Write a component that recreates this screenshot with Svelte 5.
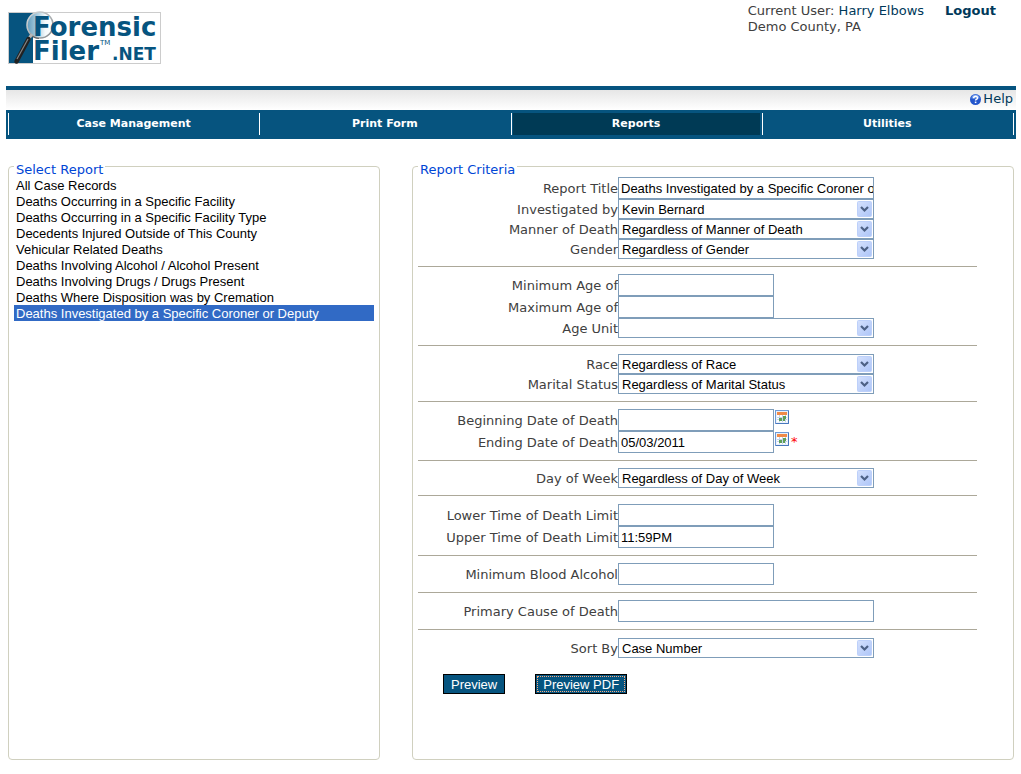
<script>
  const tabs = ['Case Management', 'Print Form', 'Reports', 'Utilities'];
  let activeTab = $state('Reports');

  const reports = [
    'All Case Records',
    'Deaths Occurring in a Specific Facility',
    'Deaths Occurring in a Specific Facility Type',
    'Decedents Injured Outside of This County',
    'Vehicular Related Deaths',
    'Deaths Involving Alcohol / Alcohol Present',
    'Deaths Involving Drugs / Drugs Present',
    'Deaths Where Disposition was by Cremation',
    'Deaths Investigated by a Specific Coroner or Deputy'
  ];
  let report = $state(reports[8]);

  const groups = [
    {
      rows: [
        { id: 'title', label: 'Report Title', type: 'text', wide: true, value: 'Deaths Investigated by a Specific Coroner or Deputy' },
        { id: 'investigator', label: 'Investigated by', type: 'select', value: 'Kevin Bernard' },
        { id: 'manner', label: 'Manner of Death', type: 'select', value: 'Regardless of Manner of Death' },
        { id: 'gender', label: 'Gender', type: 'select', value: 'Regardless of Gender' }
      ]
    },
    {
      rows: [
        { id: 'min-age', label: 'Minimum Age of', type: 'text', value: '' },
        { id: 'max-age', label: 'Maximum Age of', type: 'text', value: '' },
        { id: 'age-unit', label: 'Age Unit', type: 'select', value: '' }
      ]
    },
    {
      roomy: true,
      rows: [
        { id: 'race', label: 'Race', type: 'select', value: 'Regardless of Race' },
        { id: 'marital', label: 'Marital Status', type: 'select', value: 'Regardless of Marital Status' }
      ]
    },
    {
      rows: [
        { id: 'begin-date', label: 'Beginning Date of Death', type: 'text', date: true, value: '' },
        { id: 'end-date', label: 'Ending Date of Death', type: 'text', date: true, required: true, value: '05/03/2011' }
      ]
    },
    {
      rows: [{ id: 'weekday', label: 'Day of Week', type: 'select', value: 'Regardless of Day of Week' }]
    },
    {
      roomy: true,
      rows: [
        { id: 'lower-time', label: 'Lower Time of Death Limit', type: 'text', value: '' },
        { id: 'upper-time', label: 'Upper Time of Death Limit', type: 'text', value: '11:59PM' }
      ]
    },
    { rows: [{ id: 'alcohol', label: 'Minimum Blood Alcohol', type: 'text', value: '' }] },
    {
      rows: [{ id: 'cause', label: 'Primary Cause of Death', type: 'text', wide: true, value: '' }]
    },
    { roomy: true, rows: [{ id: 'sort', label: 'Sort By', type: 'select', value: 'Case Number' }] }
  ];
</script>

<header class="top">
  <svg class="logo" width="155" height="57" viewBox="0 0 155 57" role="img" aria-label="Forensic Filer .NET">
    <defs>
      <linearGradient id="glass" x1="0" y1="0" x2="1" y2="0">
        <stop offset="0" stop-color="#5f9bbd" />
        <stop offset="0.45" stop-color="#b9d5e4" />
        <stop offset="0.7" stop-color="#f4f9fb" />
        <stop offset="1" stop-color="#fff" />
      </linearGradient>
      <linearGradient id="rim" x1="0" y1="0" x2="1" y2="1">
        <stop offset="0" stop-color="#d8dcde" />
        <stop offset="1" stop-color="#858a8d" />
      </linearGradient>
    </defs>
    <rect x="0.5" y="2.5" width="152" height="51" fill="#fff" stroke="#ccc" />
    <rect x="1" y="3" width="24" height="50" fill="#06547f" />
    <circle cx="32" cy="15" r="13" fill="url(#glass)" stroke="url(#rim)" stroke-width="1.6" />
    <path d="M22 24a13 13 0 0 0 9 4.500" fill="none" stroke="#666" stroke-width="1.200" />
    <g class="logo-text">
      <text x="25" y="26" font-size="26">Forensic</text>
      <text x="25" y="50" font-size="26">Filer</text>
      <text class="tm" x="92" y="35" font-size="7">TM</text>
      <text x="104" y="50" font-size="17">.NET</text>
    </g>
    <path d="M24 24 L20 30" stroke="#b8b8b8" stroke-width="3" />
    <path d="M20.500 29 L8.500 51.500" stroke="#222" stroke-width="4.500" stroke-linecap="round" />
    <path d="M20 29 L9 49" stroke="#858585" stroke-width="1.200" />
  </svg>
  <div class="user">
    <div>Current User: <a href="#profile">Harry Elbows</a></div>
    <div>Demo County, PA</div>
  </div>
  <a class="logout" href="#logout">Logout</a>
</header>

<div class="bar">
  <div class="help">
    <a href="#help">
      <svg width="11" height="11" viewBox="0 0 11 11" aria-hidden="true">
        <circle cx="5.5" cy="5.5" r="5.5" fill="#2456cc" />
        <path d="M1.5 4.500a4 4 0 0 1 8 0" fill="#6d98ec" />
        <path d="M3.700 4.200q0-1.900 1.900-1.900t1.900 1.600q0 1-1.100 1.500-.8.400-.8 1.200" fill="none" stroke="#fff" stroke-width="1.500" />
        <rect x="4.800" y="7.600" width="1.600" height="1.500" fill="#fff" />
      </svg>Help</a>
  </div>
  <nav>
    {#each tabs as tab}
      <button type="button" class:active={tab === activeTab} onclick={() => (activeTab = tab)}>
        <span>{tab}</span>
      </button>
    {/each}
  </nav>
</div>

<main>
  <fieldset>
    <legend><label for="report-list">Select Report</label></legend>
    <select id="report-list" class="reports" size="9" bind:value={report}>
      {#each reports as name}
        <option value={name}>{name}</option>
      {/each}
    </select>
  </fieldset>

  <fieldset>
    <legend>Report Criteria</legend>
    <form onsubmit={(e) => e.preventDefault()}>
      {#each groups as group}
        <div class="group" class:roomy={group.roomy}>
          {#each group.rows as row}
            <div class="row">
              <label for={row.id}>{row.label}</label>
              {#if row.type === 'select'}
                <span class="combo">
                  <select id={row.id}><option>{row.value}</option></select>
                  <svg width="15" height="16" viewBox="0 0 15 16" aria-hidden="true">
                    <defs>
                      <linearGradient id="face-{row.id}" x1="0" y1="0" x2="1" y2="1">
                        <stop offset="0" stop-color="#d5e1fd" />
                        <stop offset="1" stop-color="#adc5f8" />
                      </linearGradient>
                    </defs>
                    <rect x="0.5" y="0.5" width="14" height="15" rx="1" fill="url(#face-{row.id})" stroke="#bdd0fa" />
                    <path d="M4 6 L7.500 9.500 L11 6" fill="none" stroke="#4d6185" stroke-width="2.200" />
                  </svg>
                </span>
              {:else}
                <input id={row.id} type="text" class:wide={row.wide} value={row.value} />
              {/if}
              {#if row.date}
                <button type="button" class="calendar" aria-label="Pick {row.label}">
                  <svg width="14" height="14" viewBox="0 0 14 14" aria-hidden="true">
                    <rect x="0.5" y="0.5" width="13" height="13" fill="#e9f0fa" stroke="#6f9bd6" />
                    <rect x="2" y="2" width="10" height="3" fill="#f08a48" />
                    <rect x="2" y="5" width="10" height="7" fill="#fff" />
                    <path d="M2 7.500h10M2 9.500h10M4.500 5v7M7.500 5v7M10.500 5v7" stroke="#c3d3ea" />
                    <path d="M8 6h3v3h-3zM4 8h3v3h-3zM8 9h2v2h-2z" fill="#5f9f58" />
                    <path d="M13.500 1v12.500H1" fill="none" stroke="#4777bd" />
                  </svg>
                </button>
              {/if}
              {#if row.required}<span class="required">*</span>{/if}
            </div>
          {/each}
        </div>
      {/each}
      <div class="actions">
        <button type="submit">Preview</button>
        <button type="submit" class="focused">Preview PDF</button>
      </div>
    </form>
  </fieldset>
</main>

<style>
  :global(body) {
    background: #fff;
    color: #404040;
    font: 13px/16px 'DejaVu Sans', sans-serif;
  }
  :global(#app) {
    min-height: 100vh;
    display: flex;
    flex-direction: column;
  }
  a {
    color: #00395a;
    text-decoration: none;
  }
  .top {
    display: flex;
    height: 83px;
    padding: 3px 25px 0 8px;
  }
  .logo {
    margin: 7px auto 0 0;
  }
  .logo-text {
    fill: #06547f;
    font-family: 'DejaVu Sans', sans-serif;
    font-weight: bold;
  }
  .logo-text .tm {
    font-weight: normal;
  }
  .logout {
    margin-left: 21px;
    font-weight: bold;
  }
  .bar {
    margin: 0 5px 0 6px;
    border-top: 4px solid #06547f;
  }
  .help {
    display: flex;
    justify-content: flex-end;
    height: 20px;
    padding: 0 3px 2px 0;
    box-sizing: border-box;
    background: linear-gradient(#e6e6e6, #fff);
  }
  .help a {
    display: flex;
    align-items: center;
    gap: 2px;
  }
  nav {
    display: flex;
    padding: 3px 2px 4px;
    background: #06547f;
  }
  nav::after {
    content: '';
    width: 1px;
    background: #fff;
  }
  nav button {
    flex: 1;
    display: flex;
    height: 22px;
    padding: 0 2px 0 1px;
    border: 0;
    border-left: 1px solid #fff;
    background: none;
    color: #fff;
    font: bold 11px/22px 'DejaVu Sans', sans-serif;
  }
  nav span {
    flex: 1;
    height: 22px;
  }
  nav .active span {
    background: #003a55;
  }
  main {
    flex: 1;
    display: grid;
    grid-template-columns: 372fr 602fr;
    gap: 32px;
    padding: 22px 7px 14px 8px;
  }
  fieldset {
    min-width: 0;
    margin: 0;
    padding: 6px 5px 5px;
    border: 1px solid #d0d0bf;
    border-radius: 4px;
  }
  legend {
    height: 10px;
    padding: 0 2px;
    color: #0046d5;
    line-height: 18px;
  }
  .reports {
    display: block;
    width: 100%;
    height: 100%;
    padding: 0;
    border: 0;
    outline: 0;
    background: #fff;
    color: #000;
    font: 13px/16px 'Liberation Sans', Arial, sans-serif;
    overflow: hidden;
  }
  .reports option {
    box-sizing: border-box;
    height: 16px;
    min-height: 0;
    padding: 1px 2px 0;
  }
  .reports option:checked {
    background: linear-gradient(#316ac5, #316ac5);
    -webkit-text-fill-color: #fff;
  }
  form {
    padding-right: 2px;
  }
  .group {
    width: 95%;
  }
  .group + .group {
    margin-top: 7px;
    padding-top: 7px;
    border-top: 1px solid #aca899;
  }
  .group + .roomy {
    padding-top: 8px;
  }
  .row {
    display: flex;
  }
  .row label {
    align-self: center;
    width: 200px;
    padding-top: 2px;
    box-sizing: border-box;
    text-align: right;
    white-space: nowrap;
  }
  input,
  .combo select {
    box-sizing: border-box;
    margin: 0;
    border: 1px solid #7f9db9;
    border-radius: 0;
    background: #fff;
    color: #000;
    font: 13px/16px 'Liberation Sans', Arial, sans-serif;
  }
  input {
    width: 156px;
    height: 22px;
    padding: 0 0 0 2px;
  }
  .wide,
  .combo {
    width: 256px;
  }
  .combo {
    position: relative;
  }
  .combo select {
    display: block;
    width: 100%;
    height: 20px;
    padding: 2px 18px 0 3px;
    appearance: none;
  }
  .combo svg {
    position: absolute;
    top: 2px;
    right: 2px;
    pointer-events: none;
  }
  .calendar {
    width: 14px;
    height: 14px;
    margin: 1px 2px 0 1px;
    padding: 0;
    border: 0;
    background: none;
  }
  .calendar svg {
    display: block;
  }
  .required {
    color: #f00;
    padding-top: 3px;
  }
  .actions {
    display: flex;
    gap: 30px;
    padding: 16px 25px;
  }
  .actions button {
    height: 20px;
    padding: 2px 7px 0;
    border: 1px solid #000;
    background: #06547f;
    color: #fff;
    font: 13px/16px 'Liberation Sans', Arial, sans-serif;
  }
  .actions .focused {
    outline: 1px dotted #f9ab80;
    outline-offset: -3px;
  }
</style>
